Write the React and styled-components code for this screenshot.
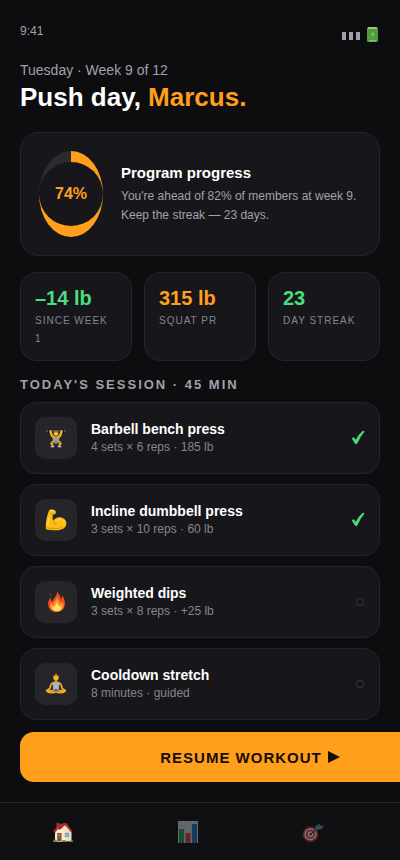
import React from 'react';
import styled, { createGlobalStyle } from 'styled-components';

const GlobalStyle = createGlobalStyle`
  * { box-sizing: border-box; }
  html { background: #0d0d0f; }
  body {
    margin: 0;
    color: #fff;
    font-family: "Liberation Sans", Arial, sans-serif;
    -webkit-font-smoothing: antialiased;
  }
  h1, h2, h3, p, ul { margin: 0; padding: 0; }
  ul { list-style: none; }
  svg { display: block; }
`;

const Page = styled.div`
  min-height: 100vh;
  display: flex;
  flex-direction: column;
  overflow: hidden;
  background: #0d0d0f;
`;

const StatusBar = styled.div`
  display: flex;
  justify-content: space-between;
  padding: 24px 20px 0;
  height: 62px;
  font-size: 12px;
  line-height: 14px;
  color: #a1a1aa;
`;

const StatusIcons = styled.div`
  display: flex;
  align-items: center;
  height: 20px;
`;

const Main = styled.main`
  display: flex;
  flex-direction: column;
  padding: 0 20px;
`;

const DateLine = styled.p`
  font-size: 14px;
  line-height: 16px;
  color: #a1a1aa;
`;

const Title = styled.h1`
  margin-top: 4px;
  font-size: 26px;
  line-height: 30px;
  font-weight: 700;
`;

const Accent = styled.span`
  color: #ff9f1c;
`;

const Card = styled.section`
  background: #17171b;
  border: 1px solid #242429;
  border-radius: 18px;
`;

const ProgressCard = styled(Card)`
  display: flex;
  align-items: center;
  gap: 18px;
  margin-top: 20px;
  padding: 18px;
`;

const Ring = styled.div`
  flex: none;
  padding: 11px 0;
  border-radius: 50%;
  background: conic-gradient(#ff9f1c ${(p) => p.$value}%, #2a2a2f 0);
`;

const RingCenter = styled.div`
  display: grid;
  place-items: center;
  width: 64px;
  height: 64px;
  border-radius: 50%;
  background: #17171b;
  color: #ff9f1c;
  font-size: 16px;
  font-weight: 700;
`;

const ProgressTitle = styled.h2`
  font-size: 15px;
  line-height: 20px;
`;

const ProgressText = styled.p`
  margin-top: 4px;
  font-size: 12px;
  line-height: 19px;
  color: #a1a1aa;
`;

const Stats = styled.div`
  display: grid;
  grid-template-columns: repeat(3, minmax(0, 1fr));
  gap: 12px;
  margin-top: 16px;
`;

const Stat = styled(Card)`
  padding: 14px 14px 12px;
  border-radius: 16px;
`;

const StatValue = styled.div`
  font-size: 20px;
  line-height: 23px;
  font-weight: 700;
  color: ${(p) => (p.$tone === 'green' ? '#4ade80' : '#ff9f1c')};
`;

const StatLabel = styled.div`
  margin-top: 2px;
  font-size: 10px;
  line-height: 18px;
  letter-spacing: 1px;
  text-transform: uppercase;
  color: #85858e;
`;

const SectionTitle = styled.h2`
  margin: 16px 0 10px;
  font-size: 13px;
  line-height: 15px;
  letter-spacing: 2px;
  text-transform: uppercase;
  color: #a1a1aa;
`;

const Exercises = styled.ul`
  display: grid;
  gap: 10px;
`;

const Exercise = styled.li`
  display: flex;
  align-items: center;
  gap: 14px;
  padding: 14px;
  background: #17171b;
  border: 1px solid #242429;
  border-radius: 16px;
`;

const IconTile = styled.div`
  display: grid;
  place-items: center;
  flex: none;
  width: 42px;
  height: 42px;
  border-radius: 10px;
  background: #25252a;
`;

const ExerciseInfo = styled.div`
  flex: 1;
  min-width: 0;
`;

const ExerciseName = styled.h3`
  font-size: 14px;
  line-height: 18px;
`;

const ExerciseMeta = styled.p`
  font-size: 12px;
  line-height: 18px;
  color: #85858e;
`;

const Dock = styled.div`
  width: 125%;
  margin-top: 12px;
`;

const ResumeButton = styled.button`
  display: flex;
  align-items: center;
  justify-content: center;
  gap: 6px;
  width: calc(100% - 40px);
  height: 50px;
  margin: 0 20px;
  border: 0;
  border-radius: 14px;
  background: #ff9f1c;
  color: #160d03;
  font: 700 15px "Liberation Sans", Arial, sans-serif;
  letter-spacing: 1px;
  text-transform: uppercase;
`;

const Nav = styled.nav`
  display: grid;
  grid-template-columns: repeat(4, 1fr);
  margin-top: 20px;
  border-top: 1px solid #242429;
  background: #101012;
`;

const NavButton = styled.button`
  display: grid;
  place-items: center;
  height: 57px;
  padding: 0;
  border: 0;
  background: none;
  opacity: ${(p) => (p.$active ? 1 : 0.5)};
`;

const Icon = ({ size = 22, children }) => (
  <svg width={size} height={size} viewBox="0 0 22 22" aria-hidden="true">{children}</svg>
);

const Signal = () => (
  <svg width="39" height="20" viewBox="0 0 39 20" role="img" aria-label="Signal and battery">
    <g fill="#a1a1aa">
      <rect x="1" y="8" width="4" height="8" />
      <rect x="8" y="8" width="4" height="8" />
      <rect x="15" y="8" width="4" height="8" />
    </g>
    <rect x="26" y="3" width="11" height="15" rx="1.5" fill="#4f9b3f" />
    <rect x="27" y="3" width="9" height="2" rx="1" fill="#9cc58e" />
    <rect x="28" y="16" width="7" height="1.5" fill="#8abb79" />
    <path d="M32 7.5 30 10.7h1.6l-.5 2.5 2.7-3.5h-1.6z" fill="#8bcc58" />
  </svg>
);

const Lifter = () => (
  <Icon size={20}>
    <path d="M1 3.2h20" stroke="#777a80" strokeWidth=".9" />
    <path d="M2.6 1v4.5M19.4 1v4.5" stroke="#111216" strokeWidth="2.2" />
    <path d="M1.2 2v2.5M20.8 2v2.5" stroke="#73767d" />
    <path d="M4.8 3.7 6.5 8.5l3 1.8M17.2 3.7l-1.7 4.8-3 1.8" fill="none" stroke="#eeb52e" strokeWidth="2.6" strokeLinecap="round" />
    <circle cx="11" cy="6" r="2.6" fill="#f7c443" />
    <path d="M8.5 5.3Q9.2 2.8 11 2.8t2.5 2.5Q11 3.8 8.5 5.3" fill="#a66f20" />
    <path d="M6.8 8.7 11 10l4.2-1.3-1 6H7.8z" fill="#d9a43a" />
    <path d="m8.4 9.2.8 2.8h3.6l.8-2.8.9 5.5-2.4 2H9.9l-2.4-2z" fill="#9a9da3" />
    <path d="m8 14.5-2.2 2.7L8 19.7M14 14.5l2.2 2.7-2.2 2.5" fill="none" stroke="#e4ad32" strokeWidth="2.2" />
    <path d="M7.8 14.8h6.4L13 17.4H9z" fill="#7c8187" />
    <path d="M5.2 20.5h3.8M13 20.5h3.8" stroke="#c4c6cc" strokeWidth="1.6" />
  </Icon>
);

const Biceps = () => (
  <Icon>
    <path d="M4.2 1.3Q5.5.1 7.6.4q3 .2 3.3 2.2.2 2-1.1 2.7l-1.9.1c-.5 2.6-.4 4.4.4 6.4 1.9-2.7 4.7-4 7.8-3.2 3.5.7 5.7 3.4 5.2 6.7-.6 4-4.8 5.9-9.3 6-4.1.1-7.8-.3-11-1C.4 15 1.5 7 4.2 1.3Z" fill="#fdbd18" />
    <path d="M5 4.1q2.6 1.8 3.9.5M8.3 12.4q.6 2.4 3 3M2 18.7q8.7 2.3 15.1-.2" fill="none" stroke="#d98b13" strokeWidth=".9" />
    <path d="M5.1 2.4q1.5-1.3 3.8-.3M4 8.7q-1.4 4.5-1.3 8" fill="none" stroke="#ffda50" strokeWidth="1.2" />
    <path d="M11.5 12q4.5-3.1 7.6 1.2" fill="none" stroke="#ffd345" strokeWidth="1.1" />
  </Icon>
);

const Flame = () => (
  <svg width="22" height="22" viewBox="-1 1 22 22" aria-hidden="true">
    <path d="M11 0c.5 3.5 4 5.5 3.6 9.2 1.3-.8 1.5-2.4 1.2-4 2.5 2.9 3.6 6.2 3 9.7-.8 4.5-3.8 7-8.2 7.1-4.9.1-8-2.8-8.4-7.3-.3-3 1-5.3 2.4-7.1.1 2 .6 3.2 1.6 3.9C8 7.4 12.1 5.5 11 0Z" fill="#ee4c20" />
    <path d="M11.2 6.3c.1 3.4 3.4 4.5 3 8 1-.5 1.8-1.8 1.8-3 1.9 2.2 2.2 5.2.6 7.5-2.5 3.7-9.2 3.8-11.6 0-1.6-2.3-1.1-4.8.2-6.8.2 1.6.8 2.7 1.9 3.1.3-3.6 4.2-4.7 4.1-8.8Z" fill="#ff941e" />
    <path d="M11 12c.1 2.4 2.3 3.1 2.1 5.2.8-.3 1.4-1.1 1.7-1.9 1.1 2.8-.4 5.8-3.9 5.8-3.6 0-5.2-2.8-4.3-5.5.5 1 1 1.5 1.8 1.7.2-2.1 2.5-3 2.6-5.3Z" fill="#ffe67a" />
    <path d="M4.8 2.7q1 1.8-.2 3-1.1-1.1.2-3" fill="#a72f20" />
  </svg>
);

const Meditation = () => (
  <Icon>
    <path d="M8 9.8Q5.4 11 5.2 14.8L3 17M14 9.8q2.6 1.2 2.8 5L19 17" fill="none" stroke="#e9ad20" strokeWidth="1.8" strokeLinecap="round" />
    <path d="M7.4 9.4Q8.8 8.4 11 8.4t3.6 1l-.8 7.1H8.2z" fill="#b1b4b9" />
    <path d="M9.7 6h2.6v3q-1.3 1.8-2.6 0z" fill="#d99d1c" />
    <circle cx="11" cy="4.4" r="2.7" fill="#f5bc27" />
    <path d="M8.3 4.5Q8 1.8 11 1.6q3 .2 2.7 2.9-1-1.8-2.7-1.8T8.3 4.5" fill="#a66d16" />
    <circle cx="11" cy="1.4" r="1" fill="#bf8120" />
    <path d="M.8 16.8q4.6-.8 10.2 2 5.6-2.8 10.2-2 .1 3.3-4.6 3.7-3.4.3-5.6-.7-2.2 1-5.6.7-4.7-.4-4.6-3.7Z" fill="#efb322" />
    <path d="m7.8 15.8 3.2 2 3.2-2 1.2 1.5-4.4 2-4.4-2z" fill="#858990" />
    <path d="M5 19.2q3.6 0 6-1.2 2.4 1.2 6 1.2" fill="none" stroke="#bd7f13" strokeWidth=".6" />
  </Icon>
);

const House = () => (
  <Icon>
    <path d="M3 10 13 4l6.5 6v10H3z" fill="#f2dfbf" />
    <path d="m3 10 4.7-6L13 13v7H3z" fill="#f9ebd1" />
    <path d="M4.5 2h2.8v5H4.5z" fill="#833d38" />
    <path d="M1.3 10.5 7 3.1 14.5 2l5.8 8.5-1.5.7-5.6-7.1-6 2-4 5.8z" fill="#b23432" />
    <path d="m7 3.5 7.2-1.1-5.6 6L5 8.2z" fill="#a22e34" />
    <path d="M5.2 12h4.3v8H5.2z" fill="#805038" />
    <path d="M6.2 13h2.3v2.5H6.2z" fill="#ac7553" />
    <rect x="12.3" y="11.3" width="5.2" height="5.2" fill="#6b9bbd" stroke="#fff4dc" strokeWidth=".6" />
    <path d="M14.9 11.3v5.2M12.3 14h5.2" stroke="#b6d0db" strokeWidth=".6" />
    <path d="M1 19.4q2-1.6 4 0M10 19.8q2-1.6 4 0t4 0q1.7-1.4 3 0v1.3H1v-1.3" fill="#6d8840" />
    <path d="M5.2 20h5v1h-5z" fill="#b8ac9c" />
  </Icon>
);

const Chart = () => (
  <Icon>
    <rect x="1" y="0" width="20" height="22" fill="#b7bdc9" />
    <path d="M1 5h20M1 10h20M1 15h20M7.5 0v22M14.2 0v22" stroke="#a5acba" strokeWidth=".5" />
    <rect x="2" y="8" width="5" height="14" fill="#199447" />
    <rect x="8.5" y="12" width="5" height="10" fill="#c13a38" />
    <rect x="15" y="3" width="5" height="19" fill="#1765ac" />
  </Icon>
);

const Target = () => (
  <Icon>
    <circle cx="8.5" cy="13.3" r="7.8" fill="#b92d3d" />
    <circle cx="8.5" cy="13.3" r="6.1" fill="#e1d6d8" />
    <circle cx="8.5" cy="13.3" r="4.6" fill="#b92d3d" />
    <circle cx="8.5" cy="13.3" r="3" fill="#e1d6d8" />
    <circle cx="8.5" cy="13.3" r="1.5" fill="#b92d3d" />
    <path d="m8.5 13.3 9-7.7" stroke="#344e59" strokeWidth="1.3" />
    <path d="m13.2 8.7.1-3.6 3.9-2.7 1 2.3 3.6.4-2.3 3.3-3.7.6z" fill="#3c8593" />
    <path d="m14 8.2 6.2-3.3" stroke="#6aafb7" strokeWidth=".8" />
  </Icon>
);

const Check = () => (
  <svg width="14" height="16" viewBox="0 0 14 16" role="img" aria-label="Completed">
    <path d="M1.2 8.5Q2.4 7 3.4 8.3l1.2 2.3Q7.5 4.8 12 1l1.1.6Q8.8 6.7 6 13.2q-.9 1.5-1.7.2Z" fill="#4ade80" stroke="#4ade80" strokeWidth=".8" strokeLinejoin="round" />
  </svg>
);

const Pending = () => (
  <svg width="10" height="10" viewBox="0 0 10 10" role="img" aria-label="Not completed">
    <circle cx="5" cy="5" r="3.7" fill="none" stroke="#34343a" strokeWidth="1" />
  </svg>
);

const Play = () => (
  <svg width="12" height="12" viewBox="0 0 12 12" aria-hidden="true">
    <path d="M0 0 12 6 0 12Z" fill="currentColor" />
  </svg>
);

const stats = [
  { value: '–14 lb', label: 'Since week 1', tone: 'green' },
  { value: '315 lb', label: 'Squat PR', tone: 'orange' },
  { value: '23', label: 'Day streak', tone: 'green' },
];

const exercises = [
  { name: 'Barbell bench press', meta: '4 sets × 6 reps · 185 lb', Drawing: Lifter, done: true },
  { name: 'Incline dumbbell press', meta: '3 sets × 10 reps · 60 lb', Drawing: Biceps, done: true },
  { name: 'Weighted dips', meta: '3 sets × 8 reps · +25 lb', Drawing: Flame, done: false },
  { name: 'Cooldown stretch', meta: '8 minutes · guided', Drawing: Meditation, done: false },
];

export default function App() {
  return (
    <Page>
      <GlobalStyle />
      <StatusBar>
        <span>9:41</span>
        <StatusIcons><Signal /></StatusIcons>
      </StatusBar>
      <Main>
        <DateLine>Tuesday · Week 9 of 12</DateLine>
        <Title>Push day, <Accent>Marcus.</Accent></Title>
        <ProgressCard>
          <Ring $value={74}><RingCenter>74%</RingCenter></Ring>
          <div>
            <ProgressTitle>Program progress</ProgressTitle>
            <ProgressText>You're ahead of 82% of members at week 9. Keep the streak — 23 days.</ProgressText>
          </div>
        </ProgressCard>
        <Stats>
          {stats.map((s) => (
            <Stat key={s.label}>
              <StatValue $tone={s.tone}>{s.value}</StatValue>
              <StatLabel>{s.label}</StatLabel>
            </Stat>
          ))}
        </Stats>
        <SectionTitle>Today's session · 45 min</SectionTitle>
        <Exercises>
          {exercises.map(({ name, meta, Drawing, done }) => (
            <Exercise key={name}>
              <IconTile><Drawing /></IconTile>
              <ExerciseInfo>
                <ExerciseName>{name}</ExerciseName>
                <ExerciseMeta>{meta}</ExerciseMeta>
              </ExerciseInfo>
              {done ? <Check /> : <Pending />}
            </Exercise>
          ))}
        </Exercises>
      </Main>
      <Dock>
        <ResumeButton type="button">Resume workout <Play /></ResumeButton>
        <Nav aria-label="Primary">
          <NavButton type="button" aria-label="Home" $active><House /></NavButton>
          <NavButton type="button" aria-label="Stats"><Chart /></NavButton>
          <NavButton type="button" aria-label="Goals"><Target /></NavButton>
        </Nav>
      </Dock>
    </Page>
  );
}
